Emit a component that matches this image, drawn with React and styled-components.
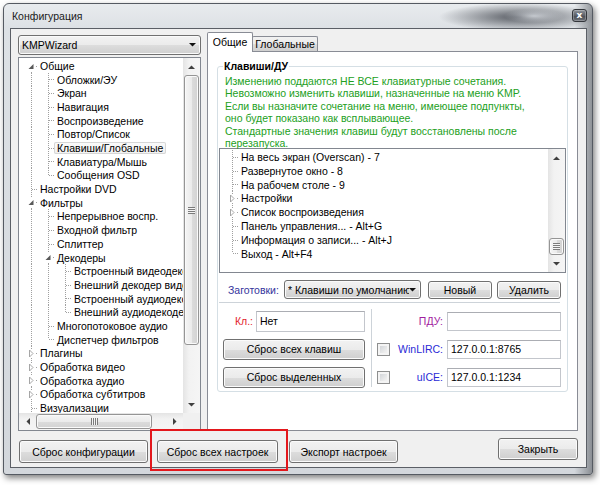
import React from 'react';
import styled, { createGlobalStyle, css } from 'styled-components';

const GlobalStyle = createGlobalStyle`
  html, body { margin: 0; padding: 0; background: #ffffff; }
  body { font-family: "Liberation Sans", Arial, sans-serif; font-size: 10.5px; color: #000; }
  *, *::before, *::after { box-sizing: border-box; }
`;

const dotV = 'repeating-linear-gradient(to bottom, #a0a0a0 0 1px, transparent 1px 2px)';
const dotH = 'repeating-linear-gradient(to right, #a0a0a0 0 1px, transparent 1px 2px)';
const btnBg = 'linear-gradient(#f2f2f2 0%, #ebebeb 50%, #dddddd 51%, #cfcfcf 100%)';

const Screen = styled.div`
  position: relative;
  width: 600px;
  height: 485px;
  overflow: hidden;
  background: #fff;
  padding: 3px 0 0 3px;
`;

const Window = styled.div`
  width: 590px;
  height: 472px;
  display: flex;
  flex-direction: column;
  padding: 0 5px 6px 6px;
  border: 1px solid #555a62;
  border-radius: 6px 6px 3px 3px;
  background:
    radial-gradient(ellipse 30px 7px at 530px 12px, rgba(225, 229, 234, 0.75), rgba(225, 229, 234, 0) 100%),
    radial-gradient(ellipse 80px 14px at 515px 13px, rgba(62, 66, 74, 0.85), rgba(62, 66, 74, 0) 100%),
    linear-gradient(90deg, rgba(0, 0, 0, 0) 97%, rgba(50, 54, 60, 0.45)),
    linear-gradient(180deg, #e8ebee 0, #dde1e5 24px, #d3d7dc 100%);
  box-shadow: 2px 3px 6px rgba(0, 0, 0, 0.5);
`;

const TitleBar = styled.div`
  flex: 0 0 24px;
  display: flex;
  align-items: center;
  justify-content: space-between;
  padding-left: 2px;
`;

const Title = styled.span`
  font-size: 10.5px;
  color: #1a1a1a;
`;

const CloseBtn = styled.div`
  align-self: flex-start;
  margin-top: 5px;
  width: 15px;
  height: 13px;
  border: 1px solid #33363b;
  border-radius: 3px;
  background: linear-gradient(#8d9299, #5d6169 50%, #4a4e55 51%, #6c7077);
  box-shadow: inset 0 0 0 1px rgba(255, 255, 255, 0.25);
  color: #fff;
  font: bold 9px/10px "DejaVu Sans", sans-serif;
  text-align: center;
`;

const Client = styled.div`
  flex: 1;
  display: flex;
  flex-direction: column;
  background: #f0f0f0;
  border: 1px solid #5b5f66;
  padding: 3px 8px 0 7px;
`;

const Main = styled.div`
  display: flex;
  gap: 6px;
  height: 399px;
`;

const LeftCol = styled.div`
  width: 183px;
  padding-top: 3px;
  display: flex;
  flex-direction: column;
  gap: 2px;
`;

const Combo = styled.div`
  display: flex;
  align-items: center;
  width: ${p => p.$w}px;
  height: ${p => p.$h}px;
  padding: 0 4px 0 3px;
  border: 1px solid #707070;
  border-radius: 3px;
  background: ${btnBg};
  box-shadow: inset 0 0 0 1px #fafafa;
`;

const ComboText = styled.span`
  flex: 1;
  min-width: 0;
  overflow: hidden;
  white-space: nowrap;
`;

const Tree = styled.div`
  height: 374px;
  border: 1px solid #828790;
  background: #fff;
  display: grid;
  grid-template-columns: 1fr 17px;
  grid-template-rows: 1fr 17px;
`;

const ListBox = styled.div`
  height: 125px;
  border: 1px solid #828790;
  background: #fff;
  display: grid;
  grid-template-columns: 1fr 17px;
`;

const View = styled.div`
  overflow: hidden;
  padding: 1px 0 0 4px;
  min-width: 0;
`;

const Row = styled.div`
  display: flex;
  align-items: stretch;
  white-space: nowrap;
`;

const Guide = styled.span`
  position: relative;
  flex: 0 0 17px;
  ${p => p.$on && css`
    &::before {
      content: '';
      position: absolute;
      left: 8px;
      top: 0;
      bottom: 0;
      width: 1px;
      background: ${dotV};
    }
  `}
`;

const Connector = styled.span`
  position: relative;
  flex: 0 0 14px;
  display: flex;
  align-items: center;
  padding-left: 4px;
  &::before {
    content: '';
    position: absolute;
    left: 8px;
    width: 1px;
    top: ${p => (p.$top ? '0' : `${p.$mid}px`)};
    bottom: ${p => (p.$bottom ? '0' : `calc(100% - ${p.$mid}px)`)};
    background: ${dotV};
  }
  &::after {
    content: '';
    position: absolute;
    left: 9px;
    right: 0;
    top: ${p => p.$mid}px;
    height: 1px;
    background: ${dotH};
  }
  svg {
    position: relative;
    z-index: 1;
  }
`;

const Label = styled.span`
  display: flex;
  align-items: center;
  padding: 0 3px;
  margin: 1px 0;
  border-radius: 2px;
  ${p => p.$sel && css`
    background: linear-gradient(#fbfbfb, #f0f0f0);
    box-shadow: inset 0 0 0 1px #d6d6d6;
  `}
`;

const VScroll = styled.div`
  display: flex;
  flex-direction: column;
  background: linear-gradient(90deg, #e4e4e4, #f2f2f2 35%, #f5f5f5);
`;

const HScroll = styled.div`
  display: flex;
  background: linear-gradient(180deg, #e4e4e4, #f2f2f2 35%, #f5f5f5);
`;

const Corner = styled.div`
  background: #f0f0f0;
`;

const ScrollBtn = styled.div`
  flex: 0 0 17px;
  display: flex;
  align-items: center;
  justify-content: center;
`;

const Track = styled.div`
  flex: 1;
  display: flex;
  flex-direction: ${p => (p.$horizontal ? 'row' : 'column')};
  justify-content: ${p => (p.$end ? 'flex-end' : 'flex-start')};
`;

const VThumb = styled.div`
  height: ${p => p.$size}px;
  margin: 0 1px;
  border: 1px solid #959595;
  border-radius: 3px;
  background: linear-gradient(90deg, #f5f5f5, #ebebeb 50%, #dcdcdc 51%, #d2d2d2);
  box-shadow: inset 0 0 0 1px #fafafa;
  display: flex;
  align-items: center;
  justify-content: center;
`;

const HThumb = styled.div`
  width: ${p => p.$size}px;
  margin: 1px 0;
  border: 1px solid #959595;
  border-radius: 3px;
  background: linear-gradient(180deg, #f5f5f5, #ebebeb 50%, #dcdcdc 51%, #d2d2d2);
  box-shadow: inset 0 0 0 1px #fafafa;
  display: flex;
  align-items: center;
  justify-content: center;
`;

const VGrip = styled.span`
  width: 7px;
  height: 7px;
  background: repeating-linear-gradient(to bottom, #7b7b7b 0 1px, #f4f4f4 1px 2px);
`;

const HGrip = styled.span`
  width: 7px;
  height: 7px;
  background: repeating-linear-gradient(to right, #7b7b7b 0 1px, #f4f4f4 1px 2px);
`;

const TabArea = styled.div`
  width: 371px;
  display: flex;
  flex-direction: column;
`;

const TabStrip = styled.div`
  position: relative;
  z-index: 1;
  display: flex;
  align-items: flex-end;
  height: 20px;
  margin-bottom: -1px;
`;

const Tab = styled.div`
  display: flex;
  align-items: center;
  justify-content: center;
  border: 1px solid #898c95;
  border-bottom: none;
  border-radius: 2px 2px 0 0;
  ${p => (p.$active
    ? css`
        width: 46px;
        height: 20px;
        background: #fff;
        padding-bottom: 2px;
      `
    : css`
        width: 66px;
        height: 15px;
        margin-bottom: 1px;
        margin-left: -1px;
        background: ${btnBg};
      `)}
`;

const Panel = styled.div`
  height: 380px;
  border: 1px solid #898c95;
  background: #fff;
`;

const GroupBox = styled.fieldset`
  margin: 8px 9px 0;
  padding: 0 1px;
  border: 1px solid #d5dfe5;
  border-radius: 3px;
  min-width: 0;
`;

const Legend = styled.legend`
  font-weight: bold;
  font-size: 10.5px;
  line-height: 13px;
  padding: 0 1px;
  margin-left: 4px;
`;

const Notice = styled.div`
  margin: 2px 0 0 6px;
  height: 73px;
  line-height: 12.4px;
  color: #22a022;
  white-space: nowrap;
`;

const PresetRow = styled.div`
  display: flex;
  align-items: center;
  height: 19px;
  margin-top: 7px;
  padding-left: 9px;
`;

const ColorLabel = styled.span`
  color: ${p => p.$color};
  white-space: nowrap;
  ${p => p.$w && css`width: ${p.$w}px;`}
  ${p => p.$right && css`text-align: right;`}
`;

const Button = styled.button`
  font: inherit;
  color: #000;
  width: ${p => p.$w}px;
  height: ${p => p.$h}px;
  margin-left: ${p => p.$ml || 0}px;
  margin-top: ${p => p.$mt || 0}px;
  padding: 0;
  border: 1px solid #707070;
  border-radius: 3px;
  background: ${btnBg};
  box-shadow: inset 0 0 0 1px #fbfbfb;
  white-space: nowrap;
  ${p => p.$push && css`margin-left: auto;`}
`;

const Separator = styled.div`
  height: 1px;
  margin: 3px 6px 0 0;
  background: #cdd3d9;
`;

const Lower = styled.div`
  display: flex;
  padding-top: 4px;
`;

const LeftPane = styled.div`
  width: 142px;
  margin-left: 4px;
  display: grid;
  grid-auto-rows: 28px;
  align-items: center;
`;

const KeyRow = styled.div`
  display: flex;
  justify-content: flex-end;
  align-items: center;
  gap: 3px;
`;

const VSep = styled.div`
  width: 1px;
  margin: 2px 0 4px 6px;
  background: #cdd3d9;
`;

const RightPane = styled.div`
  width: 189px;
  padding-left: 5px;
  display: grid;
  grid-template-columns: 13px 1fr 114px;
  column-gap: 4px;
  grid-auto-rows: 28px;
  align-items: center;
`;

const TextBox = styled.div`
  width: ${p => p.$w}px;
  height: ${p => p.$h}px;
  display: flex;
  align-items: center;
  padding: 0 3px;
  background: #fff;
  border: 1px solid #c3c6cc;
  border-top-color: #abadb3;
  white-space: nowrap;
  grid-column: 3;
`;

const Check = styled.span`
  grid-column: 1;
  width: 13px;
  height: 13px;
  border: 1px solid #8e8f8f;
  background: linear-gradient(135deg, #c9cdd2, #eeeeee 70%, #f8f8f8);
  box-shadow: inset 0 0 0 2px #f4f4f4;
`;

const Footer = styled.div`
  display: flex;
  align-items: flex-start;
  margin-top: 9px;
`;

const Highlight = styled.div`
  position: absolute;
  left: 150px;
  top: 429px;
  width: 138px;
  height: 42px;
  border: 2px solid #e3171c;
  pointer-events: none;
`;

const Arrow = ({ dir, color = '#404040' }) => {
  const vertical = dir === 'up' || dir === 'down';
  const pts = {
    up: '0,4 3.5,0.5 7,4',
    down: '0,0 3.5,3.5 7,0',
    left: '4,0 0.5,3.5 4,7',
    right: '0,0 3.5,3.5 0,7',
  }[dir];
  return (
    <svg width={vertical ? 7 : 4} height={vertical ? 4 : 7} viewBox={vertical ? '0 0 7 4' : '0 0 4 7'}>
      <polygon points={pts} fill={color} />
    </svg>
  );
};

const Expander = ({ open }) => (
  <svg width="8" height="9" viewBox="0 0 8 9">
    <rect x="0" y="0" width="8" height="9" fill="#fff" />
    {open ? (
      <polygon points="6.5,2 6.5,7 1.5,7" fill="#595959" />
    ) : (
      <polygon points="2.5,1 6,4.5 2.5,8" fill="#fff" stroke="#a6a6a6" strokeWidth="1" />
    )}
  </svg>
);

const TREE = [
  {
    t: 'Общие', open: true, c: [
      { t: 'Обложки/ЭУ' }, { t: 'Экран' }, { t: 'Навигация' }, { t: 'Воспроизведение' },
      { t: 'Повтор/Список' }, { t: 'Клавиши/Глобальные', sel: true }, { t: 'Клавиатура/Мышь' },
      { t: 'Сообщения OSD' },
    ],
  },
  { t: 'Настройки DVD' },
  {
    t: 'Фильтры', open: true, c: [
      { t: 'Непрерывное воспр.' }, { t: 'Входной фильтр' }, { t: 'Сплиттер' },
      {
        t: 'Декодеры', open: true, c: [
          { t: 'Встроенный видеодекодер' }, { t: 'Внешний декодер видео' },
          { t: 'Встроенный аудиодекодер' }, { t: 'Внешний аудиодекодер' },
        ],
      },
      { t: 'Многопотоковое аудио' }, { t: 'Диспетчер фильтров' },
    ],
  },
  { t: 'Плагины', c: [] },
  { t: 'Обработка видео', c: [] },
  { t: 'Обработка аудио', c: [] },
  { t: 'Обработка субтитров', c: [] },
  { t: 'Визуализации' },
];

const KEYS = [
  { t: 'На весь экран (Overscan) - 7' },
  { t: 'Развернутое окно - 8' },
  { t: 'На рабочем столе - 9' },
  { t: 'Настройки', c: [] },
  { t: 'Список воспроизведения', c: [] },
  { t: 'Панель управления... - Alt+G' },
  { t: 'Информация о записи... - Alt+J' },
  { t: 'Выход - Alt+F4' },
];

function flatten(nodes, depth, guides, opts) {
  const rows = [];
  nodes.forEach((n, i) => {
    const last = i === nodes.length - 1 && !(depth === 0 && opts.rootMore);
    const first = depth === 0 && i === 0 && !opts.rootAbove;
    rows.push({
      t: n.t,
      sel: n.sel,
      guides,
      top: !first,
      bottom: !last,
      kind: n.c ? (n.open ? 'open' : 'closed') : null,
    });
    if (n.c && n.open) rows.push(...flatten(n.c, depth + 1, [...guides, !last], opts));
  });
  return rows;
}

const TREE_ROWS = flatten(TREE, 0, [], { rootMore: true, rootAbove: false });
const KEY_ROWS = flatten(KEYS, 0, [], { rootMore: false, rootAbove: true });

const NOTICE = [
  'Изменению поддаются НЕ ВСЕ клавиатурные сочетания.',
  'Невозможно изменить клавиши, назначенные на меню KMP.',
  'Если вы назначите сочетание на меню, имеющее подпункты,',
  'оно будет показано как всплывающее.',
  'Стандартные значения клавиш будут восстановлены после',
  'перезапуска.',
];

const TreeRows = ({ rows, pitch }) =>
  rows.map((r, i) => {
    const h = Math.round((i + 1) * pitch) - Math.round(i * pitch);
    const mid = Math.floor(h / 2);
    return (
      <Row key={i} style={{ height: h }}>
        {r.guides.map((g, j) => <Guide key={j} $on={g} />)}
        <Connector $top={r.top} $bottom={r.bottom} $mid={mid}>
          {r.kind && <Expander open={r.kind === 'open'} />}
        </Connector>
        <Label $sel={r.sel}>{r.t}</Label>
      </Row>
    );
  });

export default function App() {
  return (
    <>
      <GlobalStyle />
      <Screen>
        <Window>
          <TitleBar>
            <Title>Конфигурация</Title>
            <CloseBtn>x</CloseBtn>
          </TitleBar>
          <Client>
            <Main>
              <LeftCol>
                <Combo $w={183} $h={20}>
                  <ComboText>KMPWizard</ComboText>
                  <Arrow dir="down" color="#111" />
                </Combo>
                <Tree>
                  <View>
                    <TreeRows rows={TREE_ROWS} pitch={13.68} />
                  </View>
                  <VScroll>
                    <ScrollBtn><Arrow dir="up" /></ScrollBtn>
                    <Track>
                      <VThumb $size={270}><VGrip /></VThumb>
                    </Track>
                    <ScrollBtn><Arrow dir="down" /></ScrollBtn>
                  </VScroll>
                  <HScroll>
                    <ScrollBtn><Arrow dir="left" /></ScrollBtn>
                    <Track $horizontal>
                      <HThumb $size={116}><HGrip /></HThumb>
                    </Track>
                    <ScrollBtn><Arrow dir="right" /></ScrollBtn>
                  </HScroll>
                  <Corner />
                </Tree>
              </LeftCol>
              <TabArea>
                <TabStrip>
                  <Tab $active>Общие</Tab>
                  <Tab>Глобальные</Tab>
                </TabStrip>
                <Panel>
                  <GroupBox>
                    <Legend>Клавиши/ДУ</Legend>
                    <Notice>
                      {NOTICE.map((l, i) => <div key={i}>{l}</div>)}
                    </Notice>
                    <ListBox>
                      <View>
                        <TreeRows rows={KEY_ROWS} pitch={13.8} />
                      </View>
                      <VScroll>
                        <ScrollBtn><Arrow dir="up" /></ScrollBtn>
                        <Track $end>
                          <VThumb $size={17}><VGrip /></VThumb>
                        </Track>
                        <ScrollBtn><Arrow dir="down" /></ScrollBtn>
                      </VScroll>
                    </ListBox>
                    <PresetRow>
                      <ColorLabel $color="#34349c" $w={56}>Заготовки:</ColorLabel>
                      <Combo $w={137} $h={19}>
                        <ComboText>* Клавиши по умолчанию</ComboText>
                        <Arrow dir="down" color="#111" />
                      </Combo>
                      <Button $w={64} $h={18} $ml={7}>Новый</Button>
                      <Button $w={64} $h={18} $ml={5}>Удалить</Button>
                    </PresetRow>
                    <Separator />
                    <Lower>
                      <LeftPane>
                        <KeyRow>
                          <ColorLabel $color="#e3262e">Кл.:</ColorLabel>
                          <TextBox $w={109} $h={21}>Нет</TextBox>
                        </KeyRow>
                        <Button $w={142} $h={21}>Сброс всех клавиш</Button>
                        <Button $w={142} $h={21}>Сброс выделенных</Button>
                      </LeftPane>
                      <VSep />
                      <RightPane>
                        <ColorLabel $color="#a0209e" $right style={{ gridColumn: 2 }}>ПДУ:</ColorLabel>
                        <TextBox $w={114} $h={19} />
                        <Check />
                        <ColorLabel $color="#2a2ad6" $right>WinLIRC:</ColorLabel>
                        <TextBox $w={114} $h={19}>127.0.0.1:8765</TextBox>
                        <Check />
                        <ColorLabel $color="#2a2ad6" $right>uICE:</ColorLabel>
                        <TextBox $w={114} $h={19}>127.0.0.1:1234</TextBox>
                      </RightPane>
                    </Lower>
                  </GroupBox>
                </Panel>
              </TabArea>
            </Main>
            <Footer>
              <Button $w={129} $h={23} $ml={1}>Сброс конфигурации</Button>
              <Button $w={121} $h={23} $ml={9}>Сброс всех настроек</Button>
              <Button $w={109} $h={23} $ml={11}>Экспорт настроек</Button>
              <Button $w={80} $h={22} $mt={-2} $push>Закрыть</Button>
            </Footer>
          </Client>
        </Window>
        <Highlight />
      </Screen>
    </>
  );
}
